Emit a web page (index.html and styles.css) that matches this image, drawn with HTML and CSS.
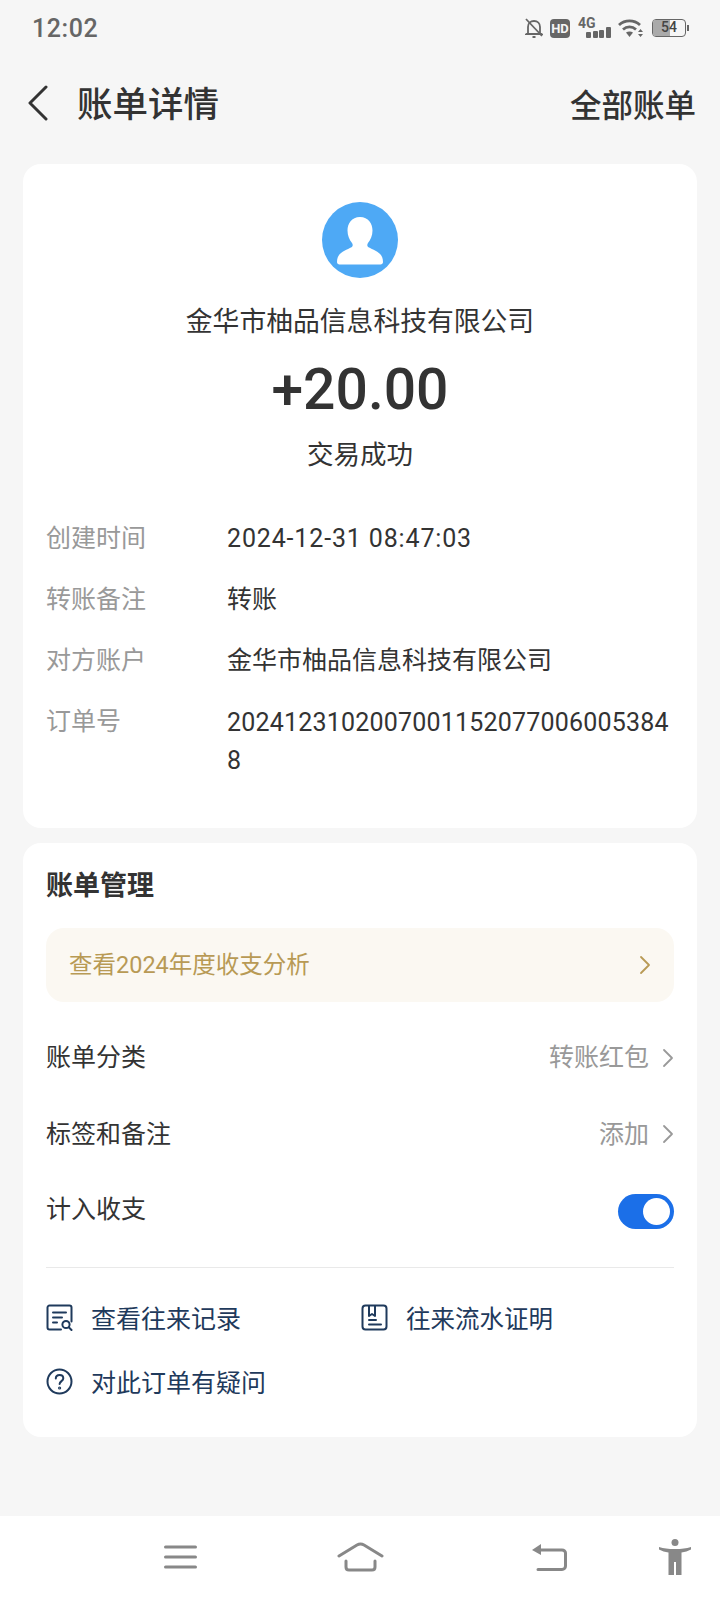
FILE: index.html
```html
<!DOCTYPE html>
<html lang="zh-CN">
<head>
  <meta charset="UTF-8">
  <meta name="viewport" content="width=device-width, initial-scale=1.0">
  <title>账单详情</title>
  <link rel="stylesheet" href="styles.css">
</head>
<body>

<div class="status-bar">
  <span class="status-time">12:02</span>
  <div class="status-icons">
    <svg class="icon-bell" width="18" height="20" viewBox="0 0 18 20" fill="none" stroke="#666" stroke-width="1.8">
      <path d="M3 15V9c0-3.4 2.4-6 6-6s6 2.600 6 6v6l1.500 1H1.500z"/>
      <path d="M1 1l16 17"/>
      <path d="M7.500 19h3" stroke-width="2"/>
    </svg>
    <span class="status-hd">HD</span>
    <div class="status-signal">
      <span class="status-4g">4G</span>
      <div class="signal-bars"><i class="bar-1"></i><i class="bar-2"></i><i class="bar-3"></i><i class="bar-4"></i></div>
    </div>
    <svg class="icon-wifi" width="25" height="18" viewBox="0 0 25 18" fill="none" stroke="#666" stroke-width="2.800">
      <path d="M1 6C7 .5 16 .5 22 6"/>
      <path d="M5 10.500c3.800-3.400 9.200-3.400 13 0"/>
      <path d="M11.500 18l-3.500-4.500c2-1.500 5-1.500 7 0z" fill="#666" stroke="none"/>
      <path d="M22.500 10l2.500 3h-5zM22.500 18l-2.500-3h5z" fill="#666" stroke="none"/>
    </svg>
    <div class="battery"><div class="battery-fill"></div><span class="battery-num">54</span></div>
    <div class="battery-tip"></div>
  </div>
</div>

<div class="top-bar">
  <svg class="icon-back" width="22" height="36" viewBox="0 0 22 36" fill="none" stroke="#333" stroke-width="3" stroke-linecap="round" stroke-linejoin="round">
    <path d="M19 2L3 18l16 16"/>
  </svg>
  <span class="top-title">账单详情</span>
  <span class="top-link">全部账单</span>
</div>

<div class="card card-detail">
  <div class="avatar">
    <svg width="76" height="76" viewBox="0 0 76 76">
      <path fill="#fff" d="M38 15c-8.500 0-12.500 6.500-12.500 13.500 0 5 2 9.500 4.500 12.500 1 1.300 1 3.300-.5 4.300C24 48.500 15 50 15 60c0 1.500 1 2.500 2.500 2.500h41c1.500 0 2.500-1 2.500-2.500 0-10-9-11.500-14.500-14.700-1.500-1-1.500-3-.5-4.300 2.500-3 4.500-7.500 4.500-12.500C50.500 21.500 46.500 15 38 15z"/>
    </svg>
  </div>
  <div class="payee">金华市柚品信息科技有限公司</div>
  <div class="amount">+20.00</div>
  <div class="trade-state">交易成功</div>

  <div class="detail-list">
    <div class="detail-label">创建时间</div>
    <div class="detail-value detail-date">2024-12-31 08:47:03</div>
    <div class="detail-label">转账备注</div>
    <div class="detail-value">转账</div>
    <div class="detail-label">对方账户</div>
    <div class="detail-value">金华市柚品信息科技有限公司</div>
    <div class="detail-label">订单号</div>
    <div class="detail-value order-no">20241231020070011520770060053848</div>
  </div>
</div>

<div class="card card-manage">
  <div class="manage-title">账单管理</div>

  <div class="year-banner">
    <span class="year-text">查看2024年度收支分析</span>
    <svg class="year-arrow" width="12" height="20" viewBox="0 0 12 20" fill="none" stroke="#b89a55" stroke-width="1.800" stroke-linecap="round" stroke-linejoin="round"><path d="M2 2l8 8-8 8"/></svg>
  </div>

  <div class="manage-row row-category">
    <span>账单分类</span>
    <div class="row-right">
      <span>转账红包</span>
      <svg width="12" height="20" viewBox="0 0 12 20" fill="none" stroke="#999" stroke-width="1.800" stroke-linecap="round" stroke-linejoin="round"><path d="M2 2l8 8-8 8"/></svg>
    </div>
  </div>
  <div class="manage-row row-tags">
    <span>标签和备注</span>
    <div class="row-right">
      <span>添加</span>
      <svg width="12" height="20" viewBox="0 0 12 20" fill="none" stroke="#999" stroke-width="1.800" stroke-linecap="round" stroke-linejoin="round"><path d="M2 2l8 8-8 8"/></svg>
    </div>
  </div>
  <div class="manage-row row-count">
    <span>计入收支</span>
    <div class="toggle"><div class="toggle-knob"></div></div>
  </div>

  <div class="divider"></div>

  <div class="link-row">
    <div class="link-item link-records">
      <svg width="27" height="27" viewBox="0 0 27 27" fill="none" stroke="#1f3a5c" stroke-width="2" stroke-linecap="round">
        <path d="M15 25.500H3.500a2 2 0 0 1-2-2v-20a2 2 0 0 1 2-2h20a2 2 0 0 1 2 2v14"/>
        <path d="M7 8.500h13M7 13.500h9M7 18.500h4"/>
        <circle cx="20" cy="20.500" r="3.600"/>
        <path d="M23 23.500l2.500 2.500"/>
      </svg>
      <span>查看往来记录</span>
    </div>
    <div class="link-item link-proof">
      <svg width="27" height="27" viewBox="0 0 27 27" fill="none" stroke="#1f3a5c" stroke-width="2" stroke-linecap="round" stroke-linejoin="round">
        <rect x="1.500" y="1.500" width="24" height="24" rx="3"/>
        <path d="M8 2v10l3-2 3 2V2"/>
        <path d="M8 16h7M8 20.500h12"/>
      </svg>
      <span>往来流水证明</span>
    </div>
  </div>
  <div class="link-row">
    <div class="link-item">
      <svg width="27" height="27" viewBox="0 0 27 27" fill="none" stroke="#1f3a5c" stroke-width="2" stroke-linecap="round">
        <circle cx="13.500" cy="13.500" r="12"/>
        <path d="M9.800 10.500c0-2.200 1.700-3.600 3.800-3.600s3.700 1.400 3.700 3.300c0 2.900-3.700 2.900-3.700 5.900"/>
        <circle cx="13.600" cy="20" r="0.600"/>
      </svg>
      <span>对此订单有疑问</span>
    </div>
  </div>
</div>

<div class="nav-bar">
  <svg class="nav-menu" width="33" height="24" viewBox="0 0 33 24" fill="none" stroke="#888" stroke-width="3" stroke-linecap="round">
    <path d="M1.500 2h30M1.500 12h30M1.500 22h30"/>
  </svg>
  <svg class="nav-home" width="47" height="30" viewBox="0 0 47 30" fill="none" stroke="#888" stroke-width="3" stroke-linecap="round" stroke-linejoin="round">
    <path d="M2 14L20 3c2-1.200 5-1.200 7 0l18 11"/>
    <path d="M9 19v6c0 2 1.500 3 3 3h23c1.500 0 3-1 3-3v-6"/>
  </svg>
  <svg class="nav-back" width="35" height="28" viewBox="0 0 35 28" fill="none" stroke="#888" stroke-width="3" stroke-linecap="round" stroke-linejoin="round">
    <path d="M7 7h23c2 0 3.500 1.500 3.500 3v13c0 2-1.500 3.500-3.500 3.500H6"/>
    <path d="M0 7l9-6v11z" fill="#888" stroke="none"/>
  </svg>
  <svg class="nav-person" width="32" height="36" viewBox="0 0 32 36" fill="#888">
    <circle cx="16" cy="3.500" r="3.500"/>
    <path d="M0 8c5 1.500 9 2 16 2s11-.5 16-2v2.500c-3 1.500-6 2.500-9.500 3V36H17V23h-2v13H9.500V13.500c-3.500-.5-6.500-1.500-9.500-3z"/>
  </svg>
</div>

</body>
</html>
```

FILE: styles.css
```css
* {
  box-sizing: border-box;
}

body {
  margin: 0;
  height: 1600px;
  overflow: hidden;
  display: flex;
  flex-direction: column;
  background: #f6f6f6;
  color: #333;
  font-family: Roboto, "Noto Sans CJK SC", sans-serif;
}

/* status bar */
.status-bar {
  height: 56px;
  display: flex;
  align-items: center;
  justify-content: space-between;
  padding: 0 32px;
}

.status-time {
  font-size: 25px;
  font-weight: 500;
  letter-spacing: 0.6px;
  color: #666;
}

.status-icons {
  display: flex;
  align-items: center;
  margin-right: -1px;
}

.icon-bell {
  margin-right: 7px;
}

.status-hd {
  width: 20px;
  height: 19px;
  border-radius: 4px;
  background: #666;
  color: #f6f6f6;
  font-size: 13px;
  font-weight: 700;
  line-height: 19px;
  text-align: center;
  margin-right: 8px;
}

.status-signal {
  width: 32px;
  height: 20px;
  position: relative;
  margin-right: 8px;
}

.status-4g {
  position: absolute;
  left: 0;
  top: -1px;
  font-size: 14px;
  font-weight: 700;
  line-height: 12px;
  color: #666;
}

.signal-bars {
  position: absolute;
  left: 8px;
  bottom: 0;
  display: flex;
  align-items: flex-end;
  gap: 1.500px;
}

.signal-bars i {
  width: 5px;
  background: #666;
  border-radius: 1px;
}

.bar-1 { height: 6px; }
.bar-2 { height: 7px; }
.bar-3 { height: 8px; }
.bar-4 { height: 11px; }

.icon-wifi {
  margin-right: 9px;
}

.battery {
  width: 34px;
  height: 18px;
  border: 1.5px solid #666;
  border-radius: 4px;
  position: relative;
}

.battery-fill {
  width: 54%;
  height: 100%;
  border-radius: 2px 0 0 2px;
  background: #aaa;
}

.battery-num {
  position: absolute;
  left: 0;
  right: 0;
  top: 0;
  font-size: 14px;
  font-weight: 500;
  line-height: 15px;
  text-align: center;
  color: #444;
}

.battery-tip {
  width: 2px;
  height: 6px;
  margin-left: 1px;
  background: #666;
}

/* top bar */
.top-bar {
  height: 94px;
  display: flex;
  align-items: center;
  padding: 4px 24px 0 27px;
}

.icon-back {
  margin-bottom: 4px;
}

.top-title {
  margin-left: 28px;
  font-size: 35.500px;
  font-weight: 500;
  line-height: 50px;
}

.top-link {
  margin-left: auto;
  margin-top: 3px;
  font-size: 31.500px;
  font-weight: 500;
  line-height: 50px;
}

/* cards */
.card {
  margin: 0 23px;
  background: #fff;
  border-radius: 18px;
}

.card-detail {
  margin-top: 14px;
  height: 664px;
  padding-top: 38px;
  display: flex;
  flex-direction: column;
  align-items: center;
}

.avatar {
  width: 76px;
  height: 76px;
  border-radius: 50%;
  background: #4ea9f5;
}

.avatar svg {
  display: block;
}

.payee {
  margin-top: 26px;
  font-size: 26.800px;
  line-height: 36px;
}

.amount {
  margin-top: 15px;
  font-size: 57px;
  font-weight: 500;
  line-height: 70px;
}

.trade-state {
  margin-top: 12px;
  font-size: 26.500px;
  line-height: 36px;
}

.detail-list {
  margin-top: 48px;
  align-self: stretch;
  padding: 0 23px;
  display: grid;
  grid-template-columns: 181px 1fr;
  row-gap: 25px;
}

.detail-label {
  color: #999;
  font-size: 25px;
  line-height: 36px;
}

.detail-value {
  font-size: 25px;
  line-height: 36px;
}

.detail-date {
  letter-spacing: 0.850px;
}

.order-no {
  width: 445px;
  line-height: 38px;
  word-break: break-all;
  letter-spacing: 0.2px;
}

.card-manage {
  margin-top: 15px;
  height: 594px;
  padding: 25px 23px 0;
  font-size: 25px;
}

.manage-title {
  font-size: 27px;
  font-weight: 700;
  line-height: 36px;
}

.year-banner {
  margin-top: 24px;
  height: 74px;
  border-radius: 18px;
  background: #fbf8f2;
  color: #b89a55;
  display: flex;
  align-items: center;
  justify-content: space-between;
  padding: 0 23px;
  font-size: 23.500px;
}

.year-text {
  margin-bottom: 4px;
}

.manage-row {
  display: flex;
  align-items: center;
  justify-content: space-between;
}

.row-category {
  margin-top: 15px;
  height: 76px;
}

.row-tags {
  height: 77px;
}

.row-count {
  height: 73px;
}

.row-right {
  display: flex;
  align-items: center;
  gap: 13px;
  color: #999;
}

.row-right svg {
  margin-top: 5px;
}

.toggle {
  width: 56px;
  height: 35px;
  margin-top: 10px;
  border-radius: 18px;
  background: #1b6fe8;
  display: flex;
  align-items: center;
  justify-content: flex-end;
  padding-right: 4px;
}

.toggle-knob {
  width: 27px;
  height: 27px;
  border-radius: 50%;
  background: #fff;
}

.divider {
  margin-top: 24px;
  margin-bottom: 17px;
  height: 1px;
  background: #e9e9e9;
}

.link-row {
  height: 64px;
  display: flex;
  align-items: center;
}

.link-item {
  display: flex;
  align-items: center;
  gap: 18px;
  color: #1f3a5c;
}

.link-item svg {
  flex: none;
}

.link-records {
  width: 315px;
}

.link-proof {
  font-size: 24.500px;
}

/* bottom nav */
.nav-bar {
  margin-top: auto;
  height: 84px;
  background: #fff;
  display: flex;
  align-items: center;
  padding: 0 0 2px 164px;
}

.nav-home {
  margin-left: 140px;
}

.nav-back {
  margin-left: 148px;
}

.nav-person {
  margin-left: 92px;
}
```
